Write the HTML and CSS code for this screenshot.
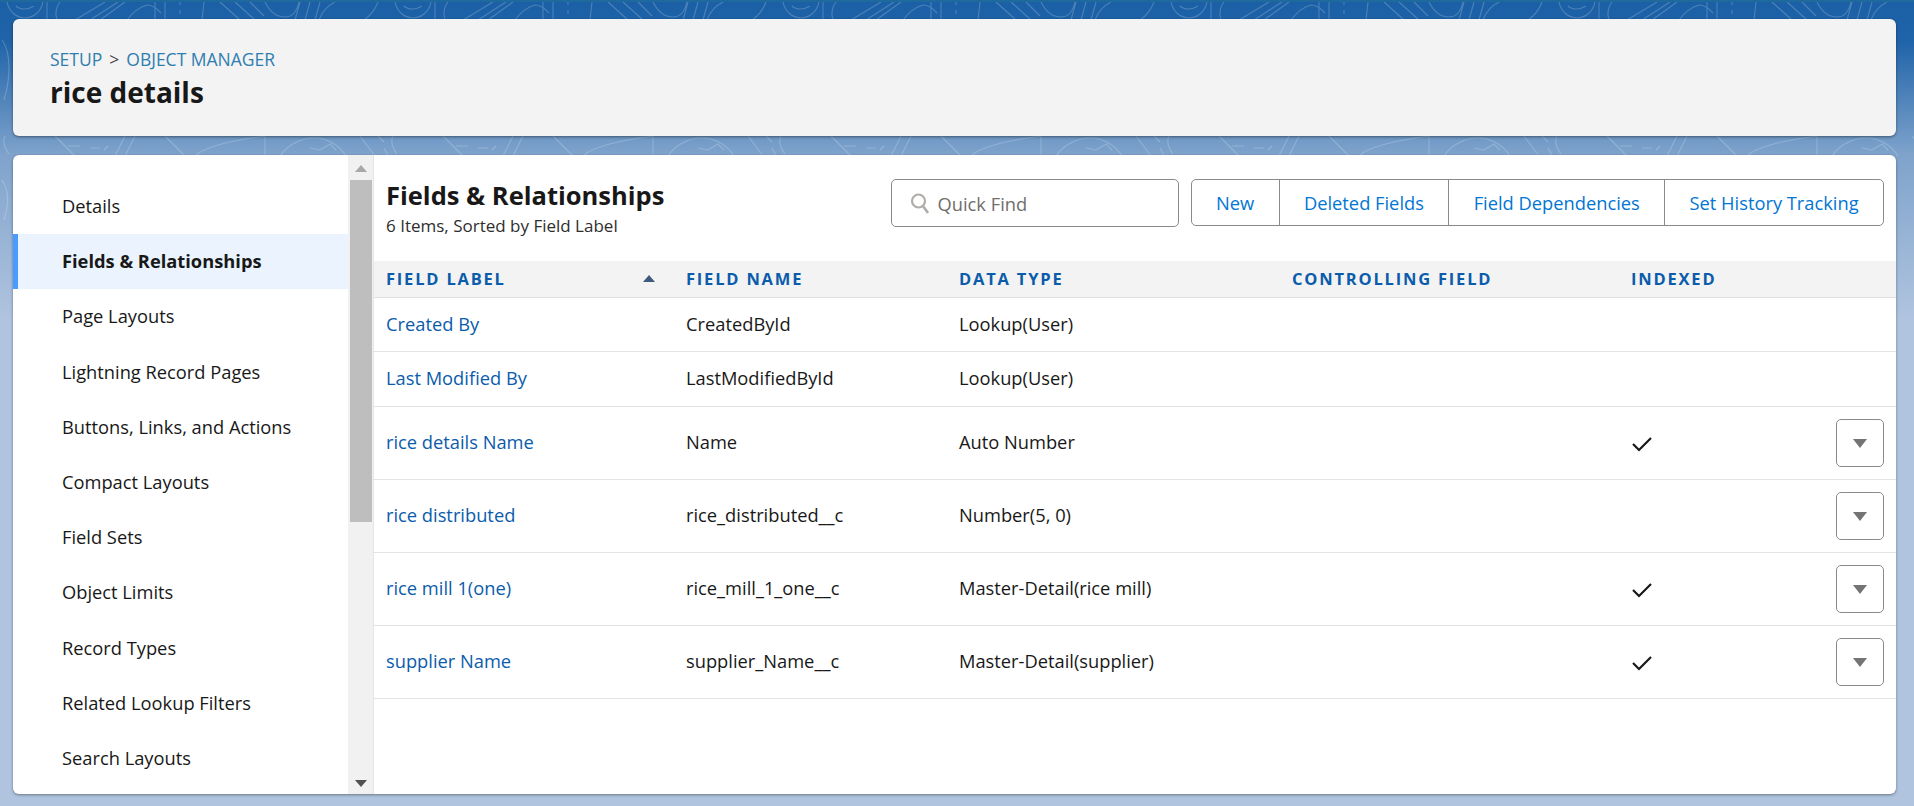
FILE: index.html
```html
<!DOCTYPE html>
<html lang="en">
<head>
  <meta charset="UTF-8" />
  <title>rice details | Object Manager</title>
  <link rel="stylesheet" href="styles.css">
</head>
<body>

<header class="page-header">
  <div class="crumbs"><a href="#">SETUP</a><span class="sep">&gt;</span><a href="#">OBJECT MANAGER</a></div>
  <h1>rice details</h1>
</header>

<main class="main-card">
  <nav class="sidebar">
    <ul class="side-list">
      <li>Details</li>
      <li class="selected">Fields &amp; Relationships</li>
      <li>Page Layouts</li>
      <li>Lightning Record Pages</li>
      <li>Buttons, Links, and Actions</li>
      <li>Compact Layouts</li>
      <li>Field Sets</li>
      <li>Object Limits</li>
      <li>Record Types</li>
      <li>Related Lookup Filters</li>
      <li>Search Layouts</li>
    </ul>
    <div class="scrollbar">
      <span class="arrow-up"></span>
      <div class="thumb"></div>
      <span class="arrow-down"></span>
    </div>
  </nav>

  <section class="content">
    <div class="toolbar">
      <div class="title-block">
        <h2>Fields &amp; Relationships</h2>
        <p>6 Items, Sorted by Field Label</p>
      </div>
      <div class="search-box">
        <svg class="search-icon" viewBox="0 0 20 22" width="20" height="22"><circle cx="8.5" cy="9" r="6.5" fill="none" stroke="#b0adab" stroke-width="2.2"/><path d="M13 14l5 7" fill="none" stroke="#b0adab" stroke-width="2.6"/></svg>
        <span>Quick Find</span>
      </div>
      <div class="btn-group">
        <a href="#">New</a>
        <a href="#">Deleted Fields</a>
        <a href="#">Field Dependencies</a>
        <a href="#">Set History Tracking</a>
      </div>
    </div>

    <table class="fields">
      <thead>
        <tr>
          <th class="col-label">FIELD LABEL<span class="sort-up"></span></th>
          <th class="col-name">FIELD NAME</th>
          <th class="col-type">DATA TYPE</th>
          <th class="col-ctrl">CONTROLLING FIELD</th>
          <th>INDEXED</th>
          <th class="col-menu"></th>
        </tr>
      </thead>
      <tbody>
        <tr class="short">
          <td><a href="#">Created By</a></td><td>CreatedById</td><td>Lookup(User)</td><td></td><td></td><td></td>
        </tr>
        <tr class="short">
          <td><a href="#">Last Modified By</a></td><td>LastModifiedById</td><td>Lookup(User)</td><td></td><td></td><td></td>
        </tr>
        <tr>
          <td><a href="#">rice details Name</a></td><td>Name</td><td>Auto Number</td><td></td>
          <td><svg class="check" viewBox="0 0 20 16" width="20" height="16"><path d="M1 8l6 6L19 2" fill="none" stroke="#181818" stroke-width="2.2"/></svg></td>
          <td><button class="row-menu"><span></span></button></td>
        </tr>
        <tr>
          <td><a href="#">rice distributed</a></td><td>rice_distributed__c</td><td>Number(5, 0)</td><td></td>
          <td></td>
          <td><button class="row-menu"><span></span></button></td>
        </tr>
        <tr>
          <td><a href="#">rice mill 1(one)</a></td><td>rice_mill_1_one__c</td><td>Master-Detail(rice mill)</td><td></td>
          <td><svg class="check" viewBox="0 0 20 16" width="20" height="16"><path d="M1 8l6 6L19 2" fill="none" stroke="#181818" stroke-width="2.2"/></svg></td>
          <td><button class="row-menu"><span></span></button></td>
        </tr>
        <tr>
          <td><a href="#">supplier Name</a></td><td>supplier_Name__c</td><td>Master-Detail(supplier)</td><td></td>
          <td><svg class="check" viewBox="0 0 20 16" width="20" height="16"><path d="M1 8l6 6L19 2" fill="none" stroke="#181818" stroke-width="2.2"/></svg></td>
          <td><button class="row-menu"><span></span></button></td>
        </tr>
      </tbody>
    </table>
  </section>
</main>

</body>
</html>
```

FILE: styles.css
```css
* {
  box-sizing: border-box;
}

html, body {
  height: 100%;
}

body {
  margin: 0;
  height: 806px;
  overflow: hidden;
  padding: 19px 18px 12px 13px;
  display: flex;
  flex-direction: column;
  gap: 19px;
  font-family: "Open Sans", "Noto Sans", Arial, sans-serif;
  font-size: 18.3px;
  color: #181818;
  background-color: #b0c4df;
  background-image:
    linear-gradient(#1f6a9c, #1f6a9c),
    url("data:image/svg+xml,%3Csvg xmlns='http://www.w3.org/2000/svg' width='388' height='320'%3E%3Cg fill='none' stroke='%23ffffff' stroke-opacity='.2' stroke-width='1.1'%3E%3Cpath d='M7 2c2 10 10 16 18 16s16-6 18-16M16 6c4 4 12 4 18 0M47 2v18M60 2c-4 5-5 12-3 18M105 2L75 20M118 2L90 20M125 2l-25 18M127 20c6-8 12-13 20-15 6 0 10 4 14 8M155 2v18M165 2v18M180 2v3M180 10v4M204 2l-2 18M220 2l20 18M235 2l20 18M250 2l14 14M265 2c5 10 12 15 20 15 7 0 12-6 14-15M300 2l-5 18M310 2l-5 18M320 2l-5 18M335 2c-8 4-13 10-16 18M378 2c-3 8-8 14-14 18'/%3E%3Cpath d='M55 136l20 20M68 146h12M90 148h10M108 146l-4 4M125 136l-10 20M135 136l-10 20M165 136l20 20M195 156c10-10 40-16 70-20M265 136v20M280 156c8-12 22-18 34-18 14 0 26 8 32 18M310 148l10 2 10-6 6 6M360 136l15 20M378 136l6 6M384 148l4 8'/%3E%3Cpath d='M5 136c-2 4-2 10 4 18M2 40c10 14 8 40 2 60M2 180c8 12 6 28 2 40M388 60c-8 10-10 24-6 40M384 220c4 12 2 24-2 36'/%3E%3C/g%3E%3C/svg%3E"),
    linear-gradient(#1b60a6 0, #1f63a8 40px, #7fa3cc 155px, #b0c4df 320px);
  background-repeat: no-repeat, repeat-x, no-repeat;
  background-size: 100% 2px, auto, auto;
}

a {
  color: #0b5cab;
  text-decoration: none;
}

/* top card */
.page-header {
  flex: none;
  height: 117px;
  padding: 28px 24px 0 37px;
  background: #f3f3f3;
  border-radius: 6px;
  box-shadow: 0 1px 3px rgba(0, 0, 0, 0.45);
}

.crumbs {
  font-size: 17.5px;
  line-height: 24px;
  color: #444;
}

.crumbs a {
  color: #2e7eb0;
}

.sep {
  margin: 0 7px;
}

.page-header h1 {
  margin: 2px 0 0;
  font-size: 28px;
  line-height: 38px;
  font-weight: 700;
}

/* main card */
.main-card {
  flex: 1;
  min-height: 0;
  display: flex;
  background: #fff;
  border-radius: 6px;
  box-shadow: 0 1px 3px rgba(0, 0, 0, 0.4);
  overflow: hidden;
}

.sidebar {
  flex: none;
  width: 361px;
  display: flex;
}

.side-list {
  flex: 1;
  list-style: none;
  margin: 0;
  padding: 24px 0 0;
}

.side-list li {
  height: 55.2px;
  line-height: 54px;
  padding-left: 44px;
  border-left: 5px solid transparent;
}

.side-list li.selected {
  background: #ebf4fe;
  border-left-color: #4a9bff;
  font-weight: 700;
}

.scrollbar {
  flex: none;
  width: 26px;
  background: #f1f1f1;
  display: flex;
  flex-direction: column;
  align-items: center;
  padding: 10px 0 7px;
  border-right: 1px solid #e5e5e5;
}

.arrow-up {
  border: 6px solid transparent;
  border-top: 0;
  border-bottom: 7px solid #a8a8a8;
}

.thumb {
  width: 22px;
  height: 342px;
  margin-top: 8px;
  background: #bebebe;
}

.arrow-down {
  margin-top: auto;
  border: 6px solid transparent;
  border-bottom: 0;
  border-top: 7px solid #505050;
}

/* right side */
.content {
  flex: 1;
  min-width: 0;
}

.toolbar {
  height: 106px;
  padding: 24px 12px 0 12px;
  display: flex;
  align-items: flex-start;
}

.title-block {
  flex: 1;
}

.title-block h2 {
  margin: 0;
  font-size: 25.5px;
  line-height: 33px;
  font-weight: 700;
}

.title-block p {
  margin: 3px 0 0;
  font-size: 17px;
  line-height: 22px;
  color: #2e2e2e;
}

.search-box {
  flex: none;
  width: 288px;
  height: 48px;
  margin-right: 12px;
  display: flex;
  align-items: center;
  gap: 8px;
  padding-left: 18px;
  border: 1px solid #8a8a8a;
  border-radius: 5px;
  color: #706e6b;
}

.btn-group {
  flex: none;
  display: flex;
  height: 47px;
  border: 1px solid #8a8a8a;
  border-radius: 5px;
}

.btn-group a {
  display: flex;
  align-items: center;
  padding: 0 24.4px;
  color: #0176d3;
  border-left: 1px solid #8a8a8a;
}

.btn-group a:first-child {
  border-left: none;
}

/* table */
.fields {
  width: 100%;
  border-collapse: collapse;
  table-layout: fixed;
}

.fields th {
  height: 36px;
  padding: 0 0 0 12px;
  text-align: left;
  background: #f3f3f3;
  color: #0b5cab;
  font-size: 16.5px;
  font-weight: 700;
  letter-spacing: 1.8px;
  border-bottom: 1px solid #e0e0e0;
  position: relative;
}

.col-label { width: 300px; }
.col-name { width: 273px; }
.col-type { width: 333px; }
.col-ctrl { width: 339px; }
.col-menu { width: 138px; }

.sort-up {
  position: absolute;
  left: 269px;
  top: 14px;
  border: 6px solid transparent;
  border-top: 0;
  border-bottom: 7px solid #3f5a7d;
}

.fields td {
  padding: 0 12px;
  height: 73px;
  border-bottom: 1px solid #e3e3e3;
}

.fields td:nth-child(-n+3) {
  padding-bottom: 2px;
}

.fields tr.short td {
  height: 54.5px;
}

.check {
  display: block;
  margin: 3px 0 0 1px;
}

.row-menu {
  display: block;
  width: 48px;
  height: 48px;
  margin-left: auto;
  padding: 2px 0 0;
  background: #fff;
  border: 1px solid #8a8a8a;
  border-radius: 5px;
}

.row-menu span {
  display: block;
  width: 0;
  margin: 0 auto;
  border: 7.5px solid transparent;
  border-bottom: 0;
  border-top: 9px solid #747474;
}
```
